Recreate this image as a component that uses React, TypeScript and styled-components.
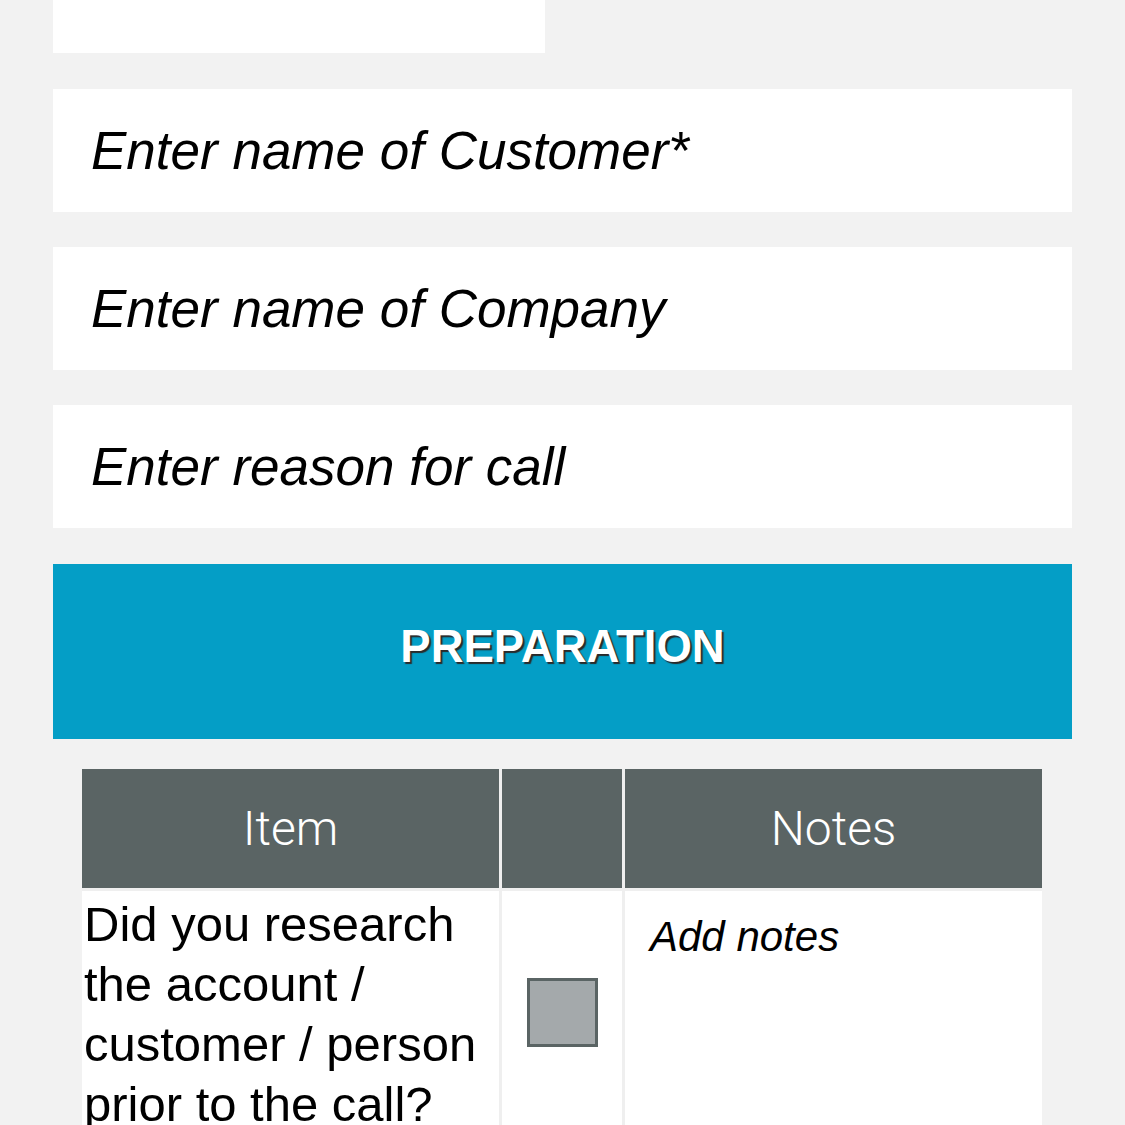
import React from 'react';
import styled, { createGlobalStyle } from 'styled-components';

const GlobalStyle = createGlobalStyle`
  body {
    margin: 0;
    background: #f2f2f2;
    font-family: "Liberation Sans", Arial, sans-serif;
  }
`;

const Page = styled.div`
  padding: 0 53px;
  display: flex;
  flex-direction: column;
`;

const TopStub = styled.div`
  width: 492px;
  height: 53px;
  background: #fff;
`;

const TextField = styled.input`
  display: block;
  box-sizing: border-box;
  width: 100%;
  height: 123px;
  margin-top: 35px;
  padding: 0 38px;
  border: none;
  outline: none;
  background: #fff;
  font-family: "Liberation Sans", Arial, sans-serif;
  font-style: italic;
  font-size: 53px;
  color: #000;

  &::placeholder {
    color: #000;
    opacity: 1;
  }

  &:first-of-type {
    margin-top: 36px;
  }
`;

const SectionBar = styled.div`
  box-sizing: border-box;
  margin-top: 36px;
  height: 175px;
  padding-bottom: 10px;
  background: #049ec6;
  display: flex;
  align-items: center;
  justify-content: center;
  color: #fff;
  font-weight: 700;
  font-size: 45.5px;
  text-shadow: 2px 2px 1px #2a2a2a;
`;

const Checklist = styled.div`
  margin: 30px 30px 0 29px;
  display: grid;
  grid-template-columns: 417px 120px 417px;
  gap: 3px;
  background: #efefef;
`;

const HeadCell = styled.div`
  height: 119px;
  background: #5a6464;
  color: #fff;
  display: flex;
  align-items: center;
  justify-content: center;
  font-family: Roboto, "Liberation Sans", sans-serif;
  font-weight: 300;
  font-size: 48px;
`;

const ItemCell = styled.div`
  background: #fff;
  padding: 3px 2px 0;
  font-size: 49px;
  line-height: 60px;
  color: #000;
`;

const CheckCell = styled.div`
  background: #fff;
  display: flex;
  align-items: center;
  justify-content: center;
`;

const CheckBox = styled.div<{ checked?: boolean }>`
  box-sizing: border-box;
  width: 71px;
  height: 69px;
  border: 3px solid #5a6464;
  background: ${p => (p.checked ? '#5a6464' : '#a4a9ab')};
`;

const NotesCell = styled.div`
  background: #fff;
  padding: 22px 25px 0;
  font-style: italic;
  font-size: 42px;
  color: #000;
`;

interface CheckItem {
  question: string;
  done: boolean;
  notes: string;
}

const items: CheckItem[] = [
  {
    question: 'Did you research the account / customer / person prior to the call?',
    done: false,
    notes: '',
  },
];

export default function App() {
  return (
    <>
      <GlobalStyle />
      <Page>
        <TopStub />
        <TextField placeholder="Enter name of Customer*" />
        <TextField placeholder="Enter name of Company" />
        <TextField placeholder="Enter reason for call" />
        <SectionBar>PREPARATION</SectionBar>
        <Checklist>
          <HeadCell>Item</HeadCell>
          <HeadCell />
          <HeadCell>Notes</HeadCell>
          {items.map((item, i) => (
            <React.Fragment key={i}>
              <ItemCell>{item.question}</ItemCell>
              <CheckCell>
                <CheckBox checked={item.done} />
              </CheckCell>
              <NotesCell>{item.notes || 'Add notes'}</NotesCell>
            </React.Fragment>
          ))}
        </Checklist>
      </Page>
    </>
  );
}
